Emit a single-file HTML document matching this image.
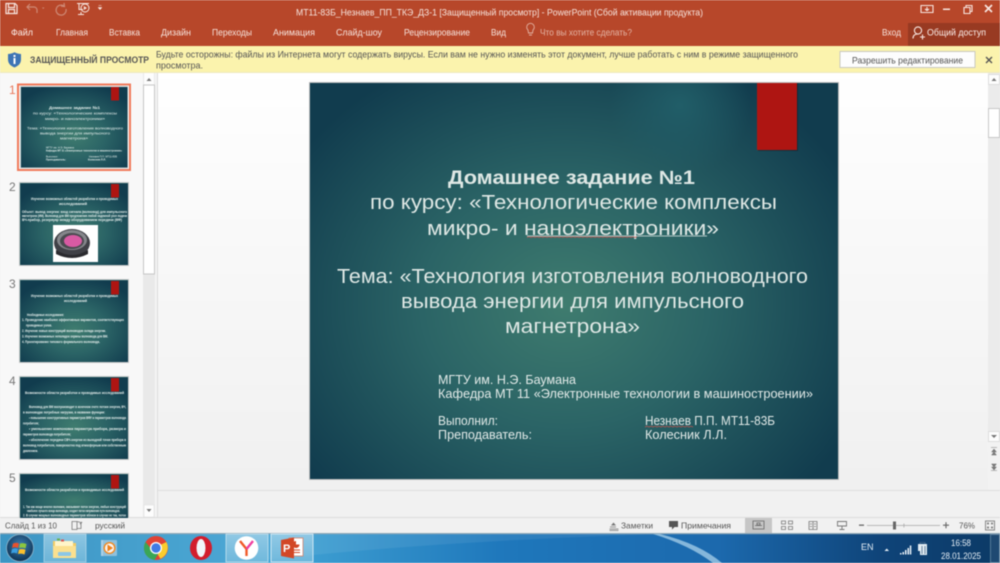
<!DOCTYPE html>
<html lang="ru"><head><meta charset="utf-8"><title>PowerPoint</title>
<style>
html,body{margin:0;padding:0;width:1000px;height:563px;overflow:hidden;background:#f1f1f1}
svg{display:block;filter:blur(.5px)}
text{font-family:"Liberation Sans",sans-serif;white-space:pre}
.t{fill:#f6e3dc;font-size:9px}
.s{fill:#dfe8e5;font-size:16px}
.b{fill:#e2eae8;font-size:12.5px}
.g{fill:#555;font-size:8.5px}
.w{fill:#e8f0ee;font-size:3.4px}
</style></head><body>
<svg width="1000" height="563" viewBox="0 0 1000 563" xmlns="http://www.w3.org/2000/svg">
<defs>
<radialGradient id="bg" gradientUnits="userSpaceOnUse" cx="565" cy="305" r="320" gradientTransform="translate(565 305) scale(1 .85) translate(-565 -305)">
<stop offset="0" stop-color="#3f7c6f"/><stop offset=".45" stop-color="#2b6466"/><stop offset="1" stop-color="#113c4e"/></radialGradient>
<radialGradient id="bg2" cx=".5" cy=".6" r=".65">
<stop offset="0" stop-color="#3f7c6f"/><stop offset=".45" stop-color="#2b6466"/><stop offset="1" stop-color="#113c4e"/></radialGradient>
<radialGradient id="pat" gradientUnits="userSpaceOnUse" cx="680" cy="105" r="70"><stop offset="0" stop-color="#22606a" stop-opacity=".9"/><stop offset="1" stop-color="#22606a" stop-opacity="0"/></radialGradient>
<linearGradient id="work" x1="0" y1="0" x2="0" y2="1"><stop offset="0" stop-color="#fff"/><stop offset="1" stop-color="#efefef"/></linearGradient>
<linearGradient id="task" x1="0" y1="0" x2="1" y2="0"><stop offset="0" stop-color="#2f8fc0"/><stop offset=".28" stop-color="#41a3d4"/><stop offset=".5" stop-color="#1f78bc"/><stop offset=".72" stop-color="#1c69ad"/><stop offset=".88" stop-color="#0f4479"/><stop offset="1" stop-color="#0c3a66"/></linearGradient>
<linearGradient id="btn" x1="0" y1="0" x2="0" y2="1"><stop offset="0" stop-color="#a7d4ea" stop-opacity=".75"/><stop offset="1" stop-color="#7fc0df" stop-opacity=".7"/></linearGradient>
<radialGradient id="orb" cx=".5" cy=".4" r=".6"><stop offset="0" stop-color="#3d7fb4"/><stop offset="1" stop-color="#0d3253"/></radialGradient>
</defs>

<!-- title bar -->
<rect width="1000" height="46" fill="#b7472a"/>
<!-- save -->
<path d="M6 3.500h9l2 2v8H6z M8.500 3.500v4h6v-4 M8.500 13.500v-4h6v4" fill="none" stroke="#f7e6e0" stroke-width="1.200"/>
<!-- undo -->
<path d="M30 4l-3 3 3 3 M27 7h7a3 3 0 0 1 3 3v3" fill="none" stroke="#cf8a76" stroke-width="1.200"/>
<path d="M42 7.500h2.500l-1.250 1.500z" fill="#cf8a76"/>
<path d="M64 3l.5 3.500-3.500-.5 M64 6a5 5 0 1 0 2 3" fill="none" stroke="#cf8a76" stroke-width="1.200"/>
<!-- slideshow -->
<path d="M77 3.500h12 M79 3.500v6h4" fill="none" stroke="#f7e6e0" stroke-width="1"/>
<circle cx="85" cy="8" r="4" fill="none" stroke="#f7e6e0" stroke-width="1"/><path d="M83.800 6l3.200 2-3.200 2z" fill="#f7e6e0"/>
<path d="M81 12v2M78 14.500h6" stroke="#f7e6e0"/>
<path d="M98.500 5.500h3M98 7.500h4l-2 2.200z" fill="#f7e6e0" stroke="#f7e6e0" stroke-width=".5"/>
<text x="296" y="15.500" class="t" textLength="407" lengthAdjust="spacingAndGlyphs">МТ11-83Б_Незнаев_ПП_ТКЭ_ДЗ-1 [Защищенный просмотр] - PowerPoint (Сбой активации продукта)</text>
<!-- window controls -->
<path d="M921 5.500h12v7h-12z M921 5.500h12M927 7v3.500M925 9l2 1.500 2-1.500" fill="none" stroke="#f7e6e0" stroke-width="1.100"/>
<rect x="943" y="8.500" width="7" height="1.500" fill="#f7e6e0"/>
<path d="M964 7.500h6v6h-6z M966 7.500v-2h6v6h-2" fill="none" stroke="#f7e6e0" stroke-width="1.100"/>
<path d="M985 5l7 7M992 5l-7 7" stroke="#f7e6e0" stroke-width="1.700"/>
<!-- tabs -->
<text x="11" y="35.500" class="t" style="fill:#fbeee9" textLength="22" lengthAdjust="spacingAndGlyphs">Файл</text>
<text x="56" y="35.500" class="t" textLength="32" lengthAdjust="spacingAndGlyphs">Главная</text>
<text x="109" y="35.500" class="t" textLength="31" lengthAdjust="spacingAndGlyphs">Вставка</text>
<text x="161" y="35.500" class="t" textLength="30" lengthAdjust="spacingAndGlyphs">Дизайн</text>
<text x="212" y="35.500" class="t" textLength="40" lengthAdjust="spacingAndGlyphs">Переходы</text>
<text x="273" y="35.500" class="t" textLength="42" lengthAdjust="spacingAndGlyphs">Анимация</text>
<text x="336" y="35.500" class="t" textLength="46" lengthAdjust="spacingAndGlyphs">Слайд-шоу</text>
<text x="404" y="35.500" class="t" textLength="66" lengthAdjust="spacingAndGlyphs">Рецензирование</text>
<text x="491" y="35.500" class="t" textLength="15" lengthAdjust="spacingAndGlyphs">Вид</text>
<path d="M528 30a3.800 3.800 0 1 1 5 0l-.5 3h-4z M529 35h3" fill="none" stroke="#e3b3a3" stroke-width=".9"/>
<text x="540" y="35.500" class="t" style="fill:#e3b3a3" textLength="92" lengthAdjust="spacingAndGlyphs">Что вы хотите сделать?</text>
<text x="882" y="35.500" class="t" textLength="19" lengthAdjust="spacingAndGlyphs">Вход</text>
<rect x="908" y="23" width="92" height="23" fill="#983a22"/>
<circle cx="918" cy="30.500" r="3.600" fill="none" stroke="#f7e6e0" stroke-width="1.100"/>
<path d="M913 38.500c0-3 2-4.500 5-4.500 M920 37h5M922.500 34.500v5" fill="none" stroke="#f7e6e0" stroke-width="1.100"/>
<text x="927" y="35.500" class="t" style="fill:#fbeee9" textLength="59" lengthAdjust="spacingAndGlyphs">Общий доступ</text>

<!-- banner -->
<rect y="46" width="1000" height="26" fill="#fbf3ad"/>
<rect y="72" width="1000" height="1" fill="#eee9c0"/>
<path d="M8 54c2 0 4.500-.8 6.500-1.800 2 1 4.500 1.800 6.500 1.800v5.500c0 4-2.800 6.500-6.500 8-3.700-1.500-6.500-4-6.500-8z" fill="#3d75b5"/>
<rect x="13.500" y="55" width="2" height="2" fill="#fff"/><rect x="13.500" y="58" width="2" height="6" fill="#fff"/>
<text x="30" y="63" style="font-size:9.500px;font-weight:bold;fill:#555" textLength="119" lengthAdjust="spacingAndGlyphs">ЗАЩИЩЕННЫЙ ПРОСМОТР</text>
<text x="156" y="57.500" style="font-size:9px;fill:#555" textLength="642" lengthAdjust="spacingAndGlyphs">Будьте осторожны: файлы из Интернета могут содержать вирусы. Если вам не нужно изменять этот документ, лучше работать с ним в режиме защищенного</text>
<text x="156" y="68.500" style="font-size:9px;fill:#555" textLength="47" lengthAdjust="spacingAndGlyphs">просмотра.</text>
<rect x="840" y="51.500" width="135" height="16" fill="#fdfdfd" stroke="#c9c9c0"/>
<text x="852" y="63.500" style="font-size:9px;fill:#555" textLength="111" lengthAdjust="spacingAndGlyphs">Разрешить редактирование</text>
<path d="M986 57l6 6M992 57l-6 6" stroke="#555" stroke-width="1.400"/>

<!-- main area -->
<rect x="0" y="73" width="143" height="445" fill="#f8f8f8"/>
<rect x="143" y="73" width="12" height="445" fill="#e9e9e9"/>
<rect x="155" y="73" width="3" height="445" fill="#f4f4f4"/>
<rect x="157" y="73" width="1" height="445" fill="#dcdcdc"/>
<rect x="158" y="73" width="842" height="445" fill="url(#work)"/>
<rect x="144" y="73" width="10" height="12" fill="#fdfdfd"/><path d="M146.500 81l2.500-3 2.500 3z" fill="#777"/>
<rect x="143.500" y="85" width="11" height="189" fill="#fff" stroke="#c6c6c6"/>
<rect x="144" y="505" width="10" height="12" fill="#fdfdfd" stroke="#ddd" stroke-width=".5"/><path d="M146.500 509h5l-2.500 3z" fill="#777"/>
<!-- right scrollbar -->
<rect x="988" y="73" width="12" height="369" fill="#ebebeb"/>
<rect x="988.500" y="74.500" width="11" height="10" fill="#fdfdfd" stroke="#ddd"/><path d="M991.500 81l2.500-3 2.500 3z" fill="#777"/>
<rect x="988.500" y="108.500" width="11" height="29" fill="#fff" stroke="#c6c6c6"/>
<rect x="988.500" y="431.500" width="11" height="10" fill="#fdfdfd" stroke="#ddd"/><path d="M991 435h6l-3 3z" fill="#777"/>
<rect x="988" y="442" width="12" height="49" fill="#f2f2f2"/>
<path d="M991 447.500h6M991.500 452l2.500-3 2.500 3zM991.500 455l2.500-3 2.500 3z" fill="#777" stroke="#777" stroke-width=".5"/>
<path d="M991 470.500h6M991.500 464l2.500 3 2.500-3zM991.500 467l2.500 3 2.500-3z" fill="#777" stroke="#777" stroke-width=".5"/>
<rect x="158" y="491" width="842" height="27" fill="#f1f1f1"/>
<rect x="158" y="490" width="842" height="1" fill="#dedede"/>
<rect x="0" y="517" width="1000" height="1" fill="#dcdcdc"/>

<!-- main slide -->
<rect x="309.500" y="82.500" width="529" height="397" fill="none" stroke="#bcbcbc"/>
<rect x="310" y="83" width="528" height="396" fill="url(#bg)"/>
<rect x="310" y="83" width="528" height="396" fill="url(#pat)"/>
<rect x="758" y="83" width="40" height="68" fill="#000" opacity=".25"/>
<rect x="757" y="83" width="40" height="67" fill="#ae1512"/>
<text x="448" y="184" class="s" style="font-weight:bold;font-size:19px" textLength="247" lengthAdjust="spacingAndGlyphs">Домашнее задание №1</text>
<text x="370" y="209" class="s" style="font-size:20px" textLength="407" lengthAdjust="spacingAndGlyphs">по курсу: «Технологические комплексы</text>
<text x="427" y="235" class="s" style="font-size:20px" textLength="292" lengthAdjust="spacingAndGlyphs">микро- и наноэлектроники»</text>
<path d="M527 236h180" stroke="#dfe9e6" stroke-width=".7"/>
<path d="M527 237.500l2-.8 2 .8 2-.8 2 .8 2-.8 2 .8 2-.8 2 .8 2-.8 2 .8 2-.8 2 .8 2-.8 2 .8 2-.8 2 .8 2-.8 2 .8 2-.8 2 .8 2-.8 2 .8 2-.8 2 .8 2-.8 2 .8 2-.8 2 .8 2-.8 2 .8 2-.8 2 .8 2-.8 2 .8 2-.8 2 .8 2-.8 2 .8 2-.8 2 .8 2-.8 2 .8 2-.8 2 .8 2-.8 2 .8 2-.8 2 .8 2-.8 2 .8 2-.8 2 .8 2-.8 2 .8 2-.8" fill="none" stroke="#c9534e" stroke-width=".7"/>
<text x="337" y="283" class="s" style="font-size:20px" textLength="471" lengthAdjust="spacingAndGlyphs">Тема: «Технология изготовления волноводного</text>
<text x="401" y="308" class="s" style="font-size:20px" textLength="343" lengthAdjust="spacingAndGlyphs">вывода энергии для импульсного</text>
<text x="505" y="333" class="s" style="font-size:20px" textLength="135" lengthAdjust="spacingAndGlyphs">магнетрона»</text>
<text x="438" y="384" class="b" textLength="138" lengthAdjust="spacingAndGlyphs">МГТУ им. Н.Э. Баумана</text>
<text x="438" y="398" class="b" textLength="375" lengthAdjust="spacingAndGlyphs">Кафедра МТ 11 «Электронные технологии в машиностроении»</text>
<text x="438" y="425" class="b" textLength="60" lengthAdjust="spacingAndGlyphs">Выполнил:</text>
<text x="438" y="439" class="b" textLength="94" lengthAdjust="spacingAndGlyphs">Преподаватель:</text>
<text x="645" y="425" class="b" textLength="130" lengthAdjust="spacingAndGlyphs">Незнаев П.П. МТ11-83Б</text>
<text x="645" y="439" class="b" textLength="82" lengthAdjust="spacingAndGlyphs">Колесник Л.Л.</text>
<path d="M645 427l2-.8 2 .8 2-.8 2 .8 2-.8 2 .8 2-.8 2 .8 2-.8 2 .8 2-.8 2 .8 2-.8 2 .8 2-.8 2 .8 2-.8 2 .8 2-.8 2 .8 2-.8 2 .8 2-.8 2 .8" fill="none" stroke="#c9534e" stroke-width=".7"/>

<!-- thumbnails -->
<text x="9" y="94" style="font-size:12px;fill:#e8775a">1</text>
<text x="9" y="191" style="font-size:12px;fill:#777">2</text>
<text x="9" y="288" style="font-size:12px;fill:#777">3</text>
<text x="9" y="385" style="font-size:12px;fill:#777">4</text>
<text x="9" y="482" style="font-size:12px;fill:#777">5</text>

<rect x="18" y="84.500" width="112" height="85.500" fill="none" stroke="#f0795a" stroke-width="2"/>
<rect x="20" y="86" width="108" height="82.500" fill="#c9d4d4"/>
<rect x="21" y="87" width="106.500" height="80.500" fill="url(#bg2)"/>
<rect x="111" y="87" width="8" height="13.500" fill="#ae1512"/>
<text x="49" y="109" class="w" style="font-size:4px;font-weight:bold" textLength="51" lengthAdjust="spacingAndGlyphs">Домашнее задание №1</text>
<text x="33" y="114.500" class="w" style="font-size:4px" textLength="84" lengthAdjust="spacingAndGlyphs">по курсу: «Технологические комплексы</text>
<text x="45" y="120" class="w" style="font-size:4px" textLength="60" lengthAdjust="spacingAndGlyphs">микро- и наноэлектроники»</text>
<text x="27" y="129.500" class="w" style="font-size:4px" textLength="96" lengthAdjust="spacingAndGlyphs">Тема: «Технология изготовления волноводного</text>
<text x="40" y="134.500" class="w" style="font-size:4px" textLength="70" lengthAdjust="spacingAndGlyphs">вывода энергии для импульсного</text>
<text x="60" y="139.500" class="w" style="font-size:4px" textLength="28" lengthAdjust="spacingAndGlyphs">магнетрона»</text>
<text x="46" y="148.500" class="w" style="font-size:2.800px" textLength="28" lengthAdjust="spacingAndGlyphs">МГТУ им. Н.Э. Баумана</text>
<text x="46" y="151.500" class="w" style="font-size:2.800px;font-weight:bold" textLength="76" lengthAdjust="spacingAndGlyphs">Кафедра МТ 11 «Электронные технологии в машиностроении»</text>
<text x="46" y="157.500" class="w" style="font-size:2.800px" textLength="12" lengthAdjust="spacingAndGlyphs">Выполнил:</text>
<text x="46" y="160.500" class="w" style="font-size:2.800px;font-weight:bold" textLength="20" lengthAdjust="spacingAndGlyphs">Преподаватель:</text>
<text x="89" y="157.500" class="w" style="font-size:2.800px" textLength="28" lengthAdjust="spacingAndGlyphs">Незнаев П.П. МТ11-83Б</text>
<text x="88" y="160.500" class="w" style="font-size:2.800px;font-weight:bold" textLength="18" lengthAdjust="spacingAndGlyphs">Колесник Л.Л.</text>

<rect x="19.500" y="182.500" width="109" height="83" fill="#2c6868" stroke="#c9c9c9"/>
<rect x="20.500" y="183.500" width="107.500" height="81.500" fill="url(#bg2)"/>
<rect x="111" y="184" width="8" height="13.500" fill="#ae1512"/>
<text x="31" y="200" class="w" style="font-weight:bold" textLength="87" lengthAdjust="spacingAndGlyphs">Изучение возможных областей разработки и проводимых</text>
<text x="59" y="205" class="w" style="font-weight:bold" textLength="28" lengthAdjust="spacingAndGlyphs">исследований</text>
<text x="22" y="213" class="w" style="font-weight:bold" textLength="105" lengthAdjust="spacingAndGlyphs">Объект: вывод энергии: вход сигнала (волновод) для импульсного</text>
<text x="22" y="217" class="w" style="font-weight:bold" textLength="105" lengthAdjust="spacingAndGlyphs">магнетрона (ИМ). Волновод для ВМ предложения любой надежной узел подачи</text>
<text x="22" y="221" class="w" style="font-weight:bold" textLength="100" lengthAdjust="spacingAndGlyphs">ВЧ-прибор, резервуар между оборудованием передачи (ВФ)</text>
<rect x="53" y="225" width="45" height="37" fill="#fff"/>
<ellipse cx="72" cy="243" rx="18" ry="14" fill="#3f4046"/>
<ellipse cx="72" cy="240" rx="15" ry="10" fill="#85868b"/>
<ellipse cx="72" cy="241" rx="12" ry="8" fill="#4a4b50"/>
<ellipse cx="73" cy="241" rx="9" ry="6" fill="#d85aa3"/>
<path d="M56 250q16 10 32 0v4q-16 8-32 0z" fill="#2a2a2e"/>

<rect x="19.500" y="279.500" width="109" height="83" fill="#2c6868" stroke="#c9c9c9"/>
<rect x="20.500" y="280.500" width="107.500" height="81.500" fill="url(#bg2)"/>
<rect x="111" y="281" width="8" height="13.500" fill="#ae1512"/>
<text x="31" y="297" class="w" style="font-weight:bold" textLength="87" lengthAdjust="spacingAndGlyphs">Изучение возможных областей разработки и проводимых</text>
<text x="64" y="302" class="w" style="font-weight:bold" textLength="23" lengthAdjust="spacingAndGlyphs">исследований</text>
<text x="27" y="316" class="w" style="font-weight:bold" textLength="37" lengthAdjust="spacingAndGlyphs">Необходимые исследования:</text>
<text x="22" y="321" class="w" style="font-weight:bold" textLength="102" lengthAdjust="spacingAndGlyphs">1. Проведение наиболее эффективных вариантов, соответствующих</text>
<text x="26" y="326.500" class="w" style="font-weight:bold" textLength="26" lengthAdjust="spacingAndGlyphs">проводимых узлов.</text>
<text x="22" y="332" class="w" style="font-weight:bold" textLength="84" lengthAdjust="spacingAndGlyphs">2. Изучение новых конструкций волноводов склада энергии.</text>
<text x="22" y="337.500" class="w" style="font-weight:bold" textLength="86" lengthAdjust="spacingAndGlyphs">3. Изучение возможных неполадок охраны волновода для ВМ.</text>
<text x="22" y="343" class="w" style="font-weight:bold" textLength="78" lengthAdjust="spacingAndGlyphs">4. Проектирование типового формального волновода.</text>

<rect x="19.500" y="376.500" width="109" height="83" fill="#2c6868" stroke="#c9c9c9"/>
<rect x="20.500" y="377.500" width="107.500" height="81.500" fill="url(#bg2)"/>
<rect x="111" y="378" width="8" height="13.500" fill="#ae1512"/>
<text x="25" y="394" class="w" style="font-weight:bold" textLength="99" lengthAdjust="spacingAndGlyphs">Возможности области разработки и проводимых исследований</text>
<text x="29" y="408" class="w" style="font-weight:bold" textLength="97" lengthAdjust="spacingAndGlyphs">Волновод для ВМ воспроизводит в конечном счете потоки энергии, ВЧ,</text>
<text x="23" y="413.500" class="w" style="font-weight:bold" textLength="82" lengthAdjust="spacingAndGlyphs">в волноводах потребных нагрузки, в названии функции:</text>
<text x="29" y="419" class="w" style="font-weight:bold" textLength="97" lengthAdjust="spacingAndGlyphs">• повышение конструктивных параметров ВФУ и параметров волновода</text>
<text x="23" y="424.500" class="w" style="font-weight:bold" textLength="16" lengthAdjust="spacingAndGlyphs">потребителя;</text>
<text x="29" y="430" class="w" style="font-weight:bold" textLength="97" lengthAdjust="spacingAndGlyphs">• уменьшение компоновки параметра прибора, размера и</text>
<text x="23" y="435.500" class="w" style="font-weight:bold" textLength="48" lengthAdjust="spacingAndGlyphs">параметров волновода потребителя;</text>
<text x="29" y="441" class="w" style="font-weight:bold" textLength="97" lengthAdjust="spacingAndGlyphs">• обеспечение передачи СВЧ-энергии из выходной точки прибора в</text>
<text x="23" y="446.500" class="w" style="font-weight:bold" textLength="103" lengthAdjust="spacingAndGlyphs">волновод потребителя, поверхностно под атмосферным или собственным</text>
<text x="23" y="452" class="w" style="font-weight:bold" textLength="15" lengthAdjust="spacingAndGlyphs">давлением.</text>

<rect x="19.500" y="473.500" width="109" height="46" fill="#2c6868" stroke="#c9c9c9"/>
<rect x="20.500" y="474.500" width="107.500" height="44" fill="url(#bg2)"/>
<rect x="111" y="475" width="8" height="13.500" fill="#ae1512"/>
<text x="25" y="491" class="w" style="font-weight:bold" textLength="99" lengthAdjust="spacingAndGlyphs">Возможности области разработки и проводимых исследований</text>
<text x="23" y="508" class="w" style="font-weight:bold" textLength="103" lengthAdjust="spacingAndGlyphs">1. Так как мощи многих волнами, оказывают поток энергии, любых конструкций</text>
<text x="27" y="512" class="w" style="font-weight:bold" textLength="93" lengthAdjust="spacingAndGlyphs">наиболее лучшего конца волновода, создает поток напряжения пути волноводов.</text>
<text x="23" y="516.500" class="w" style="font-weight:bold" textLength="103" lengthAdjust="spacingAndGlyphs">2. В случае мощных волноводных параметров вблизи в случае не так, поток</text>

<!-- status bar -->
<rect x="0" y="518" width="1000" height="15" fill="#f1f1f1"/>
<text x="5" y="528.500" class="g" textLength="52" lengthAdjust="spacingAndGlyphs">Слайд 1 из 10</text>
<path d="M72 521.500h5v8h-5zM77 521.500l4 1v6h-4" fill="none" stroke="#777" stroke-width=".8"/><path d="M80 524l2-2" stroke="#777"/>
<text x="95" y="528.500" class="g" textLength="30" lengthAdjust="spacingAndGlyphs">русский</text>
<path d="M610 527h6M609.500 529h9M609.500 530.500h9" stroke="#777" stroke-width=".8"/><path d="M611 525.500l2.500-3 2.500 3z" fill="#777"/>
<text x="621" y="528.500" class="g" textLength="32" lengthAdjust="spacingAndGlyphs">Заметки</text>
<path d="M669 521h9v6h-3.500l-2.500 2.500v-2.500h-3z" fill="#555"/>
<text x="681" y="528.500" class="g" textLength="50" lengthAdjust="spacingAndGlyphs">Примечания</text>
<rect x="745" y="518" width="27" height="15" fill="#c6c6c6"/>
<path d="M753 521h11v8h-11zM755 525.500h7M757 523h3v2h-3z" fill="none" stroke="#666" stroke-width=".8"/>
<path d="M781.500 521h4v3h-4zM788.500 521h4v3h-4zM781.500 526.500h4v3h-4zM788.500 526.500h4v3h-4z" fill="none" stroke="#777" stroke-width=".8"/>
<path d="M809 521.500h8v8h-8zM813 521.500v8M810 524h2M814 524h2M810 526.500h2M814 526.500h2" fill="none" stroke="#777" stroke-width=".8"/>
<path d="M837.500 521.500h9v4.500h-9zM842 526v3M839.500 529.500h5" fill="none" stroke="#777" stroke-width=".9"/>
<rect x="859" y="524.500" width="5" height="1.300" fill="#666"/>
<rect x="867" y="525" width="73" height=".8" fill="#aaa"/>
<rect x="893" y="521.500" width="3" height="8" fill="#666"/>
<rect x="903.500" y="523.500" width=".8" height="4" fill="#aaa"/>
<path d="M943 525.200h6M946 522.200v6" stroke="#666" stroke-width="1.100"/>
<text x="959" y="528.500" class="g" textLength="16" lengthAdjust="spacingAndGlyphs">76%</text>
<path d="M985.500 521h9v9h-9z" fill="none" stroke="#888"/><path d="M987 522.500h2v2h-2zM991 522.500h2v2h-2zM987 526.500h2v2h-2zM991 526.500h2v2h-2z" fill="#888"/>

<!-- taskbar -->
<rect x="0" y="533" width="1000" height="30" fill="url(#task)"/>
<rect x="0" y="533" width="1000" height="1.200" fill="#8fa7b6"/>
<path d="M660 534q40 10 62 29h-9q-24-18-60-29z" fill="#bfe0f2" opacity=".65"/>
<path d="M0 534h660q-250 8-420 29H0z" fill="#fff" opacity=".07"/>
<!-- start orb -->
<circle cx="20" cy="548" r="13.500" fill="url(#orb)" stroke="#8fb6cc" stroke-width=".8"/>
<path d="M13 543.500q3.500-1.500 6 0l-1 4.500q-3-1.500-6 0z" fill="#e8522e"/>
<path d="M20 543.500q3-1 6.500 .5l-1 4.500q-3-1.500-6.500-.5z" fill="#8cc63f"/>
<path d="M12 549q3-1.500 6 0l-1 4.500q-3-1.500-6 0z" fill="#3a9ee0"/>
<path d="M19 549.500q3-1 6.500 .2l-1 4.800q-3-1.500-6.500-.5z" fill="#fbc02d"/>
<!-- pinned buttons -->
<rect x="44" y="534" width="42" height="28" fill="url(#btn)" stroke="#c7e3f0" stroke-opacity=".6"/>
<path d="M53 541h8l2 2h13v15H53z" fill="#f5cd62"/>
<path d="M55 541h18v6H55z" fill="#fff5c9"/>
<path d="M53 546h23v12H53z" fill="#fbe08f"/>
<rect x="58" y="552" width="13" height="4" rx="1" fill="#8cc7e6"/>
<rect x="57" y="538.500" width="3" height="2" fill="#6bb04b"/><rect x="61" y="539.500" width="3" height="2" fill="#d9534f"/>
<rect x="101" y="540" width="13" height="16" fill="#c8dfee" opacity=".8"/>
<rect x="103" y="540" width="14" height="16" rx="1" fill="#8fc1dd"/>
<circle cx="109.500" cy="548" r="6" fill="#f28a1f"/><circle cx="109.500" cy="548" r="4.600" fill="#f7f3ee"/><path d="M107.500 544.500l5.500 3.500-5.500 3.500z" fill="#f0801a"/>
<!-- chrome -->
<circle cx="156" cy="548" r="12" fill="#e04336"/>
<path d="M166.400 542a12 12 0 0 1-6 16.700L154 548z" fill="#fbcd2e"/>
<path d="M145.600 542a12 12 0 0 0 9 18l5.800-10H152z" fill="#3aa655"/>
<circle cx="156" cy="548" r="6" fill="#fff"/><circle cx="156" cy="548" r="4.700" fill="#3f7be5"/>
<!-- opera -->
<ellipse cx="201" cy="548" rx="11" ry="12" fill="#d21d2d"/><ellipse cx="201" cy="548" rx="4.500" ry="9" fill="#f0f6fa"/>
<!-- yandex -->
<rect x="226" y="534" width="42" height="28" fill="url(#btn)" stroke="#c7e3f0" stroke-opacity=".8"/>
<circle cx="246.500" cy="548" r="11.800" fill="#fff"/>
<path d="M240 541l6.500 8v7" fill="none" stroke="#f05a28" stroke-width="2.400"/>
<path d="M253 541l-6.500 8" fill="none" stroke="#ee3fa0" stroke-width="2.400"/>
<!-- ppt -->
<rect x="271" y="534" width="42" height="28" fill="url(#btn)" stroke="#d7ecf6" stroke-opacity=".9"/>
<rect x="289" y="538" width="14" height="18" fill="#fff" stroke="#d5816a" stroke-width=".8"/>
<path d="M296 541a3.500 3.500 0 1 0 3.500 3.500h-3.500z" fill="#d24726"/><path d="M292 550h8M292 552.500h8" stroke="#d24726"/>
<path d="M281 540l13-2.500v21l-13-2.500z" fill="#d24726"/>
<text x="283" y="552" style="font-size:11px;font-weight:bold;fill:#fff">P</text>
<!-- tray -->
<text x="861" y="550" style="font-size:9px;fill:#e6eff6">EN</text>
<path d="M884.500 551h4.500l-2.250-2.500z" fill="#e6eff6"/>
<path d="M900 553h1.500v1.500H900zM902.500 552h1.500v2.500h-1.500zM905 550h1.500v4.500H905zM907.500 548h1.500v6.500h-1.500zM909.800 545.500h1.500v9h-1.500z" fill="#eaf2f8"/>
<path d="M918 544h9v11h-7v-4h-2z" fill="#e2ecf3"/><path d="M920 544v-1.500h5v1.500M922 546v8M925 546v8" stroke="#48688a" stroke-width=".8" fill="none"/>
<text x="951" y="546" style="font-size:9.500px;fill:#e6eff6" textLength="20" lengthAdjust="spacingAndGlyphs">16:58</text>
<text x="941" y="559" style="font-size:9.500px;fill:#e6eff6" textLength="40" lengthAdjust="spacingAndGlyphs">28.01.2025</text>
<rect x="990.500" y="534.500" width="9" height="28" fill="#fff" fill-opacity=".08" stroke="#7e9cb6" stroke-opacity=".6"/>
</svg>
</body></html>
